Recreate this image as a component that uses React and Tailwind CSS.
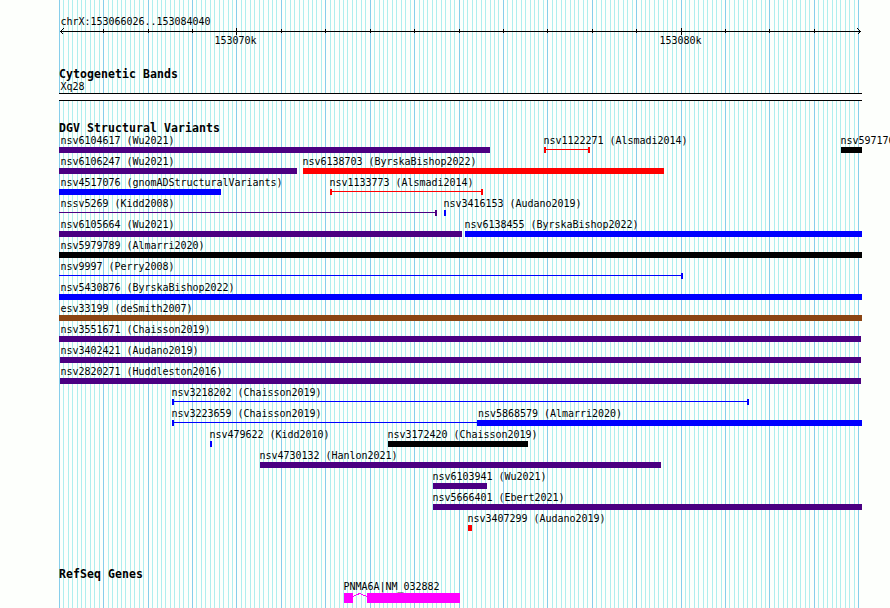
import React from "react";

const PURPLE = "#4b0082";
const BLUE = "#0000ff";
const RED = "#ff0000";
const BLACK = "#000000";
const BROWN = "#8b4513";

// start/end are canvas pixels; "thin" features are drawn as a line with end caps.
const rows = [
  [
    { label: "nsv6104617 (Wu2021)", at: 60.5, start: 59, end: 490, color: PURPLE },
    { label: "nsv1122271 (Alsmadi2014)", start: 544, end: 590, color: RED, thin: true, caps: "both" },
    { label: "nsv5971765 (Almarri2020)", start: 841, end: 862, color: BLACK },
  ],
  [
    { label: "nsv6106247 (Wu2021)", at: 60.5, start: 59, end: 297, color: PURPLE },
    { label: "nsv6138703 (ByrskaBishop2022)", start: 303, end: 664, color: RED },
  ],
  [
    { label: "nsv4517076 (gnomADStructuralVariants)", at: 60.5, start: 59, end: 221, color: BLUE },
    { label: "nsv1133773 (Alsmadi2014)", start: 330, end: 483, color: RED, thin: true, caps: "both" },
  ],
  [
    { label: "nssv5269 (Kidd2008)", at: 60.5, start: 59, end: 437, color: PURPLE, thin: true, caps: "right" },
    { label: "nsv3416153 (Audano2019)", start: 444, end: 446, color: BLUE },
  ],
  [
    { label: "nsv6105664 (Wu2021)", at: 60.5, start: 59, end: 462, color: PURPLE },
    { label: "nsv6138455 (ByrskaBishop2022)", start: 465, end: 862, color: BLUE },
  ],
  [{ label: "nsv5979789 (Almarri2020)", at: 60.5, start: 59, end: 862, color: BLACK }],
  [{ label: "nsv9997 (Perry2008)", at: 60.5, start: 59, end: 683, color: BLUE, thin: true, caps: "right" }],
  [{ label: "nsv5430876 (ByrskaBishop2022)", at: 60.5, start: 59, end: 862, color: BLUE }],
  [{ label: "esv33199 (deSmith2007)", at: 60.5, start: 59, end: 862, color: BROWN }],
  [{ label: "nsv3551671 (Chaisson2019)", at: 60.5, start: 59, end: 861, color: PURPLE }],
  [{ label: "nsv3402421 (Audano2019)", at: 60.5, start: 60, end: 861, color: PURPLE }],
  [{ label: "nsv2820271 (Huddleston2016)", at: 60.5, start: 60, end: 861, color: PURPLE }],
  [{ label: "nsv3218202 (Chaisson2019)", start: 172, end: 749, color: BLUE, thin: true, caps: "both" }],
  [
    { label: "nsv3223659 (Chaisson2019)", start: 172, end: 478, color: BLUE, thin: true, caps: "left" },
    { label: "nsv5868579 (Almarri2020)", at: 478, start: 477, end: 862, color: BLUE },
  ],
  [
    { label: "nsv479622 (Kidd2010)", start: 210, end: 212, color: BLUE },
    { label: "nsv3172420 (Chaisson2019)", start: 388, end: 528, color: BLACK },
  ],
  [{ label: "nsv4730132 (Hanlon2021)", start: 260, end: 661, color: PURPLE }],
  [{ label: "nsv6103941 (Wu2021)", start: 433, end: 487, color: PURPLE }],
  [{ label: "nsv5666401 (Ebert2021)", start: 433, end: 862, color: PURPLE }],
  [{ label: "nsv3407299 (Audano2019)", start: 468, end: 472, color: RED }],
];

const GRID = Array.from({ length: 181 }, (_, i) => ({
  x: Math.floor(59.3 + i * 4.4412),
  major: i % 10 === 0,
}));
const TICKS = GRID.filter((g, i) => g.major && i > 0 && i < 180);

function GridLines() {
  return (
    <svg className="absolute inset-0" width="890" height="608" shapeRendering="crispEdges">
      {GRID.map((g) => (
        <rect key={g.x} x={g.x} y="0" width="1" height="608" fill={g.major ? "#87ceeb" : "#afeeee"} />
      ))}
    </svg>
  );
}

function Ruler() {
  return (
    <svg className="block" width="890" height="9" shapeRendering="crispEdges">
      <rect x="60" y="4" width="801" height="1" />
      {TICKS.map((t) =>
        t.x === 236 || t.x === 681 ? (
          <rect key={t.x} x={t.x} y="1" width="1" height="7" />
        ) : (
          <rect key={t.x} x={t.x} y="2" width="1" height="4" />
        )
      )}
      <g fill="none" stroke="#000">
        <path d="M63.5 1.5L60.5 4.5L63.5 7.5" />
        <path d="M857.5 1.5L860.5 4.5L857.5 7.5" />
      </g>
    </svg>
  );
}

function Feature({ f }) {
  const width = f.end - f.start;
  return (
    <>
      <span className="absolute top-px" style={{ left: f.at ?? f.start - 0.5 }}>
        {f.label}
      </span>
      {f.thin ? (
        <div
          className="absolute top-[12px] h-[6px] flex justify-between"
          style={{ left: f.start, width, color: f.color }}
        >
          {f.caps !== "right" && <i className="w-[2px] h-[6px] bg-current" />}
          <i className="flex-1 h-px mt-[2px] bg-current" />
          {f.caps !== "left" && <i className="w-[2px] h-[6px] bg-current" />}
        </div>
      ) : (
        <div
          className="absolute top-[12px] h-[6px]"
          style={{ left: f.start, width, backgroundColor: f.color }}
        />
      )}
    </>
  );
}

function Heading({ children }) {
  return (
    <h2 className="pl-[59px] h-[12px] font-bold text-[11.5px] leading-[12px] tracking-[0.077px]">{children}</h2>
  );
}

export default function App() {
  return (
    <div className="relative w-[890px] h-[608px] overflow-hidden bg-[#fdfffc] text-black whitespace-pre font-['DejaVu_Sans_Mono',monospace] text-[10px] leading-[10px] tracking-[-0.02px]">
      <GridLines />
      <div className="relative flex flex-col">
        <div className="pt-[17px] pl-[60.5px] h-[27px]">chrX:153066026..153084040</div>
        <Ruler />
        <div className="h-[32px] flex">
          <span className="ml-[214.5px] w-[445px]">153070k</span>
          <span>153080k</span>
        </div>
        <Heading>Cytogenetic Bands</Heading>
        <div className="pt-[2px] pl-[60.5px] h-[13px]">Xq28</div>
        <div className="ml-[59px] w-[803px] h-[8px] border-y border-black bg-white" />
        <div className="h-[21px]" />
        <Heading>DGV Structural Variants</Heading>
        <div className="mt-px">
          {rows.map((row, i) => (
            <div key={i} className="relative h-[21px]">
              {row.map((f) => (
                <Feature key={f.label} f={f} />
              ))}
            </div>
          ))}
        </div>
        <div className="h-[34px]" />
        <Heading>RefSeq Genes</Heading>
        <div className="pt-[2px] pl-[343.5px] h-[13px]">PNMA6A|NM_032882</div>
        <div className="ml-[344px] flex">
          <i className="w-[9px] h-[10px] bg-[#ff00ff]" />
          <svg width="14" height="10" fill="none" stroke="#ff00ff" shapeRendering="crispEdges">
            <path d="M0 3.5L6.5 0.5L14 3.5" />
          </svg>
          <i className="w-[93px] h-[10px] bg-[#ff00ff]" />
        </div>
      </div>
    </div>
  );
}
